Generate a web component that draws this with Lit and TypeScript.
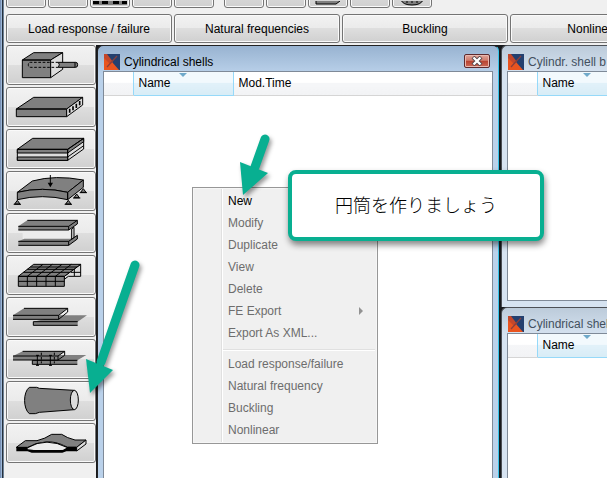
import { LitElement, html, svg, css, nothing } from "lit";
import { customElement, property } from "lit/decorators.js";

const shapes = [
  // Block with insert
  svg`<path class="g" d="M46 42H131V95H46Z M46 42L80 20H167L131 42Z"/><path class="l" d="M131 42L167 20V70L131 95Z"/>
    <path class="n dash" d="M154 49H70Q64 49 64 56Q64 64 70 64H154"/><path class="g" d="M154 49H206Q212 49 212 56Q212 64 206 64H154Q160 56 154 49Z M204 49V64"/>`,
  // Ribbed plate
  svg`<path class="g" d="M28 63H179V86H28Z M28 63L80 28H227L179 63Z"/><path class="l" d="M179 63L227 28V51L179 86Z"/>
    <path class="n thick" d="M188 62V74 M198 55V67 M208 47V60 M218 39V52"/>`,
  // Laminate
  svg`<path class="l" d="M31 58H182V91H31Z M182 58L230 25V57L182 91Z"/><path class="g" d="M31 58L77 25H230L182 58Z M31 58H182V69H31Z M31 81H182V91H31Z M182 58L230 25V35L182 69Z"/>
    <path class="n" d="M182 81L230 47"/>`,
  // Supported curved panel
  svg`<path class="g" d="M31 61L76 27Q145 8 229 24L182 61Q106 43 31 61Z"/><path class="g" d="M31 61Q106 43 182 61V83Q106 65 31 83Z M182 61L229 24V46L182 83Z"/>
    <path class="g" d="M31 85L39 96H23Z M184 85L192 96H176Z M209 66L217 77H201Z M229 50L237 61H221Z"/><path class="n" d="M20 97H42 M173 97H195 M198 78H220 M218 62H240 M130 9V36"/><path class="k" d="M122 32H138L130 46Z"/>`,
  // I-beam
  svg`<path class="w" d="M47 48H190V77H47Z"/><path class="g ns" d="M34 82L52 74H190L211 64V75L185 94H34Z"/><path class="n" d="M34 94H185L211 75V64L185 82H34 M185 82V94"/>
    <path class="l" d="M194 45L201 40V70L194 76Z"/><path class="g ns" d="M34 37L61 19H211V30L185 48H34Z"/><path class="n" d="M61 19H211L185 37H34 M34 48H185V37 M185 48L211 30V19"/>`,
  // Mesh
  svg`<path class="l" d="M172 61L221 25V61H184L172 70Z"/><path class="g" d="M34 61H172V91H34Z M34 61L80 25H221L172 61Z"/>
    <path class="n" d="M34 76H172 M61 91V61L108 25 M89 91V61L136 25 M117 91V61L165 25 M145 91V61L193 25 M49 49H188 M61 40H200 M70 33H210 M202 39V60 M192 49H221"/>`,
  // Bonded joint
  svg`<path class="g ns" d="M79 71L160 52H240L212 71V82H79Z"/><path class="n" d="M212 82H79V71H212"/>
    <path class="g ns" d="M18 52L51 31H182L155 52V64H18Z"/><path class="n" d="M51 31H182 M18 52H155V64H18 M155 64L182 42V31L155 52"/>`,
  // Bolted joint
  svg`<path class="g ns" d="M76 60L150 45H238L211 61V73H76Z"/><path class="n" d="M211 73H76V61H211"/>
    <path class="g ns" d="M18 48L47 34H173L153 48V60H18Z"/><path class="n" d="M47 34H173 M18 48H153V60H18 M153 60L173 46V34L153 48 M91 45V76 M130 45V76 M87 76H96 M126 76H135 M87 46H96 M126 46H135"/><path class="n dash" d="M103 38V70 M142 38V70"/>`,
  // Cylinder
  svg`<path class="g" d="M67 16H89L97 19L202 25V83L97 91L85 95H67C48 80 48 30 67 16Z"/><ellipse class="l" cx="202" cy="54" rx="12" ry="29"/>`,
  // Hat panel
  svg`<path class="g" d="M28 70L55 50H90Q115 44 134 31H164Q180 42 204 48H237L209 70H182Q145 50 115 54Q85 56 62 70Z"/><path class="l" d="M209 70L237 48V60L209 81Z"/>
    <path class="k" d="M28 69H62V76L80 78H168L182 68H209V82H178L166 86H74L62 82H28Z"/><path class="w" d="M66 71Q118 38 180 71L160 78H84Z"/><path class="n" d="M62 71Q118 38 182 71"/>`,
];

@customElement("app-window")
class AppWindow extends LitElement {
  @property() heading = "";
  @property({ type: Boolean, reflect: true }) active = false;

  static styles = css`
    :host {
      --top: #bccbda; --low: #d6e3f1; --ink: #43505e; --edge: #4c5056;
      display: flex; flex-direction: column; min-width: 0; min-height: 0; overflow: hidden;
      box-sizing: border-box; padding: 0 6px 6px 5px;
      border: solid var(--edge); border-width: 1px 0 0 1px; border-radius: 6px 0 0 0;
      background: linear-gradient(var(--top), var(--low) 28px);
    }
    :host([active]) {
      --top: #98b3d1; --low: #bad1ea; --ink: #000; --edge: #222;
      border-right: 1px solid #37c4ea; border-radius: 6px 6px 0 0; padding-right: 5px;
    }
    .bar { display: flex; align-items: center; height: 25px; flex: none; padding: 8px 3px 1px 1px; box-sizing: border-box; gap: 4px; }
    .title { flex: 1; margin: 0; font: 12px/18px "Liberation Sans", Arial, sans-serif; color: var(--ink); white-space: nowrap; }
    .logo { flex: none; display: block; }
    .close {
      flex: none; width: 26px; height: 14px; padding: 0; margin-bottom: 2px; border: 1px solid #5e2a2e; border-radius: 2px;
      background: linear-gradient(#e0a59b, #cf7b6c 45%, #b8412f 50%, #cc6a58); box-shadow: inset 0 0 0 1px #e9b8af;
    }
    .close svg { display: block; margin: auto; }
    .body { flex: 1; border: 1px solid #7f8a98; background: #fff; overflow: hidden; min-height: 0; }
    table { width: 100%; min-width: 230px; table-layout: fixed; border-collapse: collapse; }
    th {
      position: relative; box-sizing: border-box; height: 23px; padding: 0 5px; text-align: left;
      font: 12px/22px "Liberation Sans", Arial, sans-serif; color: #000;
      background: linear-gradient(#fff 45%, #f5f6f8 50%, #f2f3f5); border-bottom: 1px solid #d5d5d5;
    }
    .pick { width: 29px; }
    .name { width: 100px; background: linear-gradient(#f2f9fd 45%, #e1f1f9 50%, #d8ecf6); border: solid #96d9f9; border-width: 0 1px 1px; }
    .sort { position: absolute; top: 1px; left: calc(50% - 4px); border: solid transparent; border-width: 4px 4px 0; border-top-color: #6fa9ca; }
  `;

  render() {
    return html`
      <header class="bar">
        <svg class="logo" width="16" height="16" viewBox="0 0 16 16">
          <path fill="#24406f" d="M0 0H16V16H0Z" /><path fill="#e9541f" d="M0 2L8 8L2 16H0Z M8 8L15 16H1Z" />
          <path fill="#c4472a" d="M0 0H3L9 8L6 10L0 4Z" /><path fill="none" stroke="#8a3f3c" stroke-width="1.2" d="M3 13L13 2" />
        </svg>
        <h2 class="title">${this.heading}</h2>
        ${this.active
          ? html`<button class="close" aria-label="Close">
              <svg width="12" height="10" viewBox="0 0 12 10"><path d="M2 1L10 9M10 1L2 9" stroke="#53464a" stroke-width="4" /><path d="M2.5 1.5L9.5 8.5M9.5 1.5L2.5 8.5" stroke="#fff" stroke-width="2.4" /></svg>
            </button>`
          : nothing}
      </header>
      <div class="body">
        <table>
          <thead><tr>
            <th class="pick"></th>
            <th class="name" aria-sort="ascending">Name<span class="sort"></span></th>
            <th>${this.active ? "Mod.Time" : nothing}</th>
          </tr></thead>
        </table>
      </div>
    `;
  }
}

@customElement("app-root")
class AppRoot extends LitElement {
  static styles = css`
    :host {
      display: flex; flex-direction: column; position: relative; box-sizing: border-box; height: 100vh; overflow: hidden;
      padding-left: 3px; font: 12px/16px "Liberation Sans", Arial, sans-serif; color: #000;
      background: linear-gradient(90deg, #7890b4 1px, #9db8d8 1px 2px, #26303c 2px 3px, #6e8296 3px 4px, #f0f0f0 4px);
    }
    button { font: inherit; color: inherit; box-sizing: border-box; }
    .tool, .mode, .shape {
      flex: none; padding: 0; border: 1px solid #747474; border-radius: 3px;
      background: linear-gradient(#f2f2f2, #ebebeb 49%, #dedede 50%, #d0d0d0); box-shadow: inset 0 0 0 1px #fafafa;
    }
    .tools { display: flex; align-items: flex-end; gap: 2px; height: 8px; padding-left: 3px; flex: none; }
    .tool { width: 40px; height: 40px; display: flex; align-items: flex-end; justify-content: center; }
    .tool.split { margin-left: 8px; }
    .modes { display: flex; gap: 2px; padding: 6px 0 2px 3px; flex: none; }
    .mode { width: 166px; height: 29px; }
    .work { flex: 1; display: flex; min-height: 0; }
    .shapes { display: flex; flex-direction: column; gap: 2px; width: 93px; box-sizing: border-box; padding-left: 3px; flex: none; }
    .shape { width: 90px; height: 40px; }
    .shape svg { display: block; width: 87px; height: 38px; }
    .g, .l, .w, .n, .k { stroke: #000; stroke-width: 3; }
    .g { fill: #808080; } .l { fill: #dcdcdc; } .w { fill: #ececec; stroke: none; } .n { fill: none; } .k { fill: #000; stroke: none; }
    .ns { stroke: none; } .dash { stroke-dasharray: 8 5; } .thick { stroke-width: 5; }
    .desk { flex: 1; min-width: 0; display: grid; grid-template-columns: minmax(0, 1fr) 106px; gap: 2px; background: #17191d; padding-left: 1px; }
    .main { margin-bottom: -8px; }
    .side { display: grid; grid-template-rows: minmax(0, 262fr) minmax(0, 171fr); margin-right: -40px; min-width: 0; }
    .side app-window:last-child { margin-bottom: -8px; }
    .menu {
      position: absolute; left: 192px; top: 187px; width: 186px; box-sizing: border-box; margin: 0; padding: 2px; list-style: none;
      border: 1px solid #979797; color: #6d6d6d;
      background: linear-gradient(90deg, transparent 28px, #e0e0e0 28px 29px, #fff 29px 30px, transparent 30px), #f0f0f0;
      box-shadow: inset 0 0 0 1px #f6f6f6;
    }
    .item { display: flex; width: 100%; height: 22px; align-items: center; justify-content: space-between; padding: 0 12px 0 33px; border: 0; background: none; }
    .item.on { color: #000; }
    .more { border: solid transparent; border-width: 4px 0 4px 4px; border-left-color: #929292; }
    .rule { height: 1px; margin: 5px 0 2px 28px; background: #e0e0e0; border-bottom: 1px solid #fff; }
    .note {
      position: absolute; left: 288px; top: 170px; width: 256px; height: 71px; box-sizing: border-box; margin: 0; padding-bottom: 4px;
      display: flex; align-items: center; justify-content: center; border: 4px solid #08af91; border-radius: 8px; background: #fff;
      font: 300 18px/24px "Noto Sans CJK JP", sans-serif; box-shadow: 1px 4px 6px #0007;
    }
    .arrow { position: absolute; overflow: visible; filter: drop-shadow(2px 3px 2px #0006); pointer-events: none; }
    .arrow path { fill: #08af91; stroke: none; } .arrow line { stroke: #08af91; stroke-width: 9; stroke-linecap: round; }
    .first { left: 240px; top: 133px; } .second { left: 86px; top: 260px; }
  `;

  private toolIcon(i: number) {
    if (i === 2) return html`<svg width="34" height="6" viewBox="0 0 34 6"><path fill="#808080" d="M0 0H34V4H0Z" /><path fill="#000" d="M0 0H6V3H0Z M9 0H15V3H9Z M20 0H26V3H20Z M29 0H34V3H29Z" /></svg>`;
    if (i === 7) return html`<svg width="28" height="6" viewBox="0 0 28 6"><path fill="#808080" stroke="#000" d="M2 -2V3H22L26 0" /></svg>`;
    if (i === 9) return html`<svg width="24" height="6" viewBox="0 0 24 6"><path fill="#808080" stroke="#000" d="M1 -1Q3 4 12 4Q21 4 23 -1 M7 0V2 M12 0V2 M17 0V2" /></svg>`;
    return nothing;
  }

  private item(label: string) {
    return html`<li role="none"><button role="menuitem" class="item ${label === "New" ? "on" : ""}">${label}${label === "FE Export" ? html`<span class="more"></span>` : nothing}</button></li>`;
  }

  render() {
    const names = ["Block", "Ribbed plate", "Laminate", "Curved panel", "Beam", "Mesh", "Bonded joint", "Bolted joint", "Cylinder", "Hat panel"];
    return html`
      <nav class="tools" aria-label="Tools">
        ${names.map((_, i) => html`<button class="tool ${i === 5 ? "split" : ""}" aria-label="Tool ${i + 1}">${this.toolIcon(i)}</button>`)}
      </nav>
      <nav class="modes" aria-label="Analyses">
        ${["Load response / failure", "Natural frequencies", "Buckling", "Nonlinear"].map((t) => html`<button class="mode">${t}</button>`)}
      </nav>
      <div class="work">
        <nav class="shapes" aria-label="Structures">
          ${shapes.map((s, i) => html`<button class="shape" aria-label=${names[i]}><svg viewBox="0 0 261 114">${s}</svg></button>`)}
        </nav>
        <main class="desk">
          <app-window class="main" active heading="Cylindrical shells"></app-window>
          <div class="side">
            <app-window heading="Cylindr. shell b"></app-window>
            <app-window heading="Cylindrical shells"></app-window>
          </div>
        </main>
      </div>
      <ul class="menu" role="menu">
        ${["New", "Modify", "Duplicate", "View", "Delete", "FE Export", "Export As XML..."].map((t) => this.item(t))}
        <li class="rule" role="separator"></li>
        ${["Load response/failure", "Natural frequency", "Buckling", "Nonlinear"].map((t) => this.item(t))}
      </ul>
      <svg class="arrow first" width="30" height="64" viewBox="0 0 30 64"><line x1="25" y1="6" x2="15" y2="34" /><path d="M3 62L0 29L28 40Z" /></svg>
      <svg class="arrow second" width="54" height="134" viewBox="0 0 54 134"><line x1="49" y1="5" x2="15" y2="102" /><path d="M4 133L0 99L27 110Z" /></svg>
      <p class="note" lang="ja">円筒を作りましょう</p>
    `;
  }
}
